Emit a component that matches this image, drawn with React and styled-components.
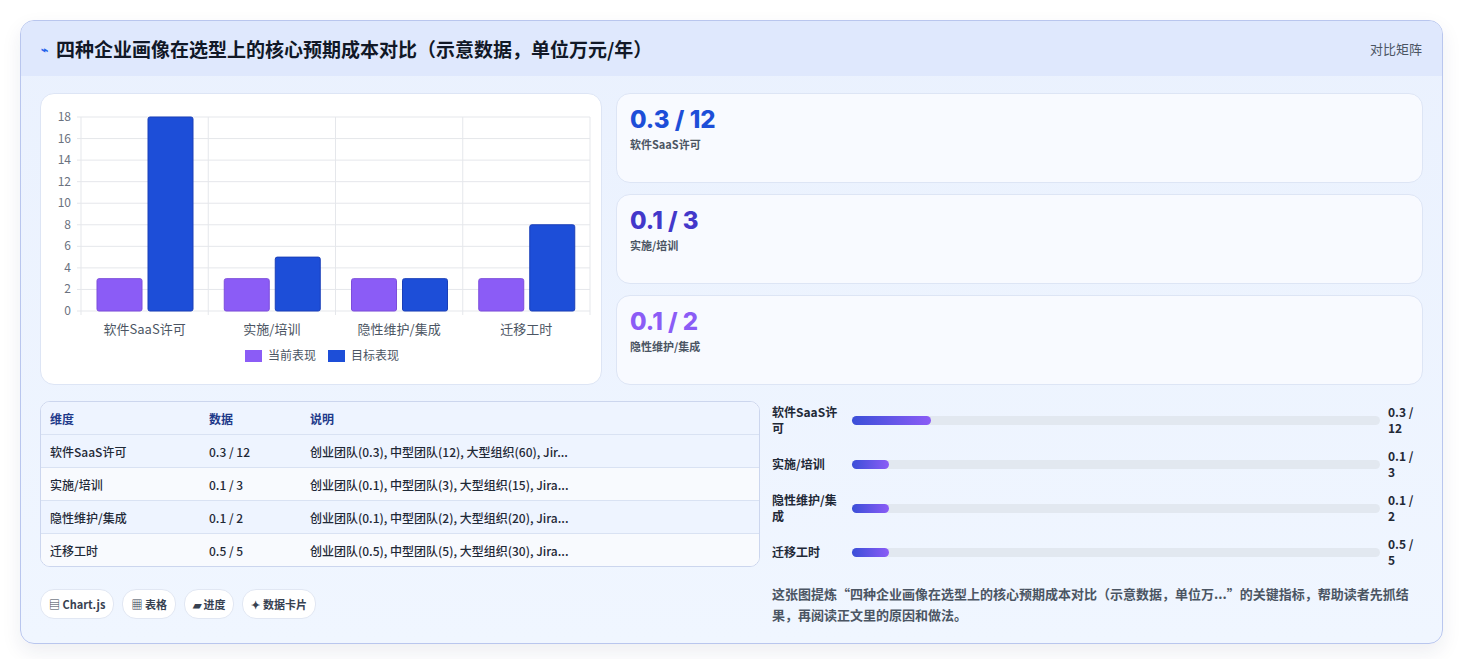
import React from 'react';
import styled, { createGlobalStyle } from 'styled-components';

const Global = createGlobalStyle`
  body { margin: 0; background: #fff; font-family: "Noto Sans CJK SC", "Noto Sans", sans-serif; }
`;

const rows = [
  { name: '软件SaaS许可', a: 0.3, b: 12, cur: 3, tgt: 18, desc: '创业团队(0.3), 中型团队(12), 大型组织(60), Jir...' },
  { name: '实施/培训', a: 0.1, b: 3, cur: 3, tgt: 5, desc: '创业团队(0.1), 中型团队(3), 大型组织(15), Jira...' },
  { name: '隐性维护/集成', a: 0.1, b: 2, cur: 3, tgt: 3, desc: '创业团队(0.1), 中型团队(2), 大型组织(20), Jira...' },
  { name: '迁移工时', a: 0.5, b: 5, cur: 3, tgt: 8, desc: '创业团队(0.5), 中型团队(5), 大型组织(30), Jira...' },
];
const barPct = [15, 7, 7, 7];
const cards = [
  { v: '0.3 / 12', l: '软件SaaS许可', c: '#1d4ed8' },
  { v: '0.1 / 3', l: '实施/培训', c: '#4338ca' },
  { v: '0.1 / 2', l: '隐性维护/集成', c: '#8b5cf6' },
];

const Page = styled.div`padding: 20px; height: 659px; box-sizing: border-box;`;
const Frame = styled.div`
  width: 1421px; border: 1px solid #b9c6ee; border-radius: 14px; overflow: hidden;
  background: linear-gradient(180deg, #eaf1fe, #f0f6ff); box-shadow: 0 8px 20px rgba(30,40,90,0.08);
`;
const Header = styled.div`
  height: 55px; background: #dfe8fd; display: flex; align-items: center; justify-content: space-between;
  padding: 0 20px;
`;
const Title = styled.h1`margin: 0; font-size: 19px; font-weight: 700; color: #111827; display: flex; align-items: center; gap: 8px;`;
const Tag = styled.span`font-size: 13px; color: #4b5563;`;
const Body = styled.div`padding: 17px 19px 18px 19px; display: flex; flex-direction: column; gap: 16px;`;
const Top = styled.div`display: grid; grid-template-columns: 562px 1fr; gap: 14px;`;
const Bottom = styled.div`display: grid; grid-template-columns: 720px 1fr; gap: 12px;`;
const ChartCard = styled.div`background: #fff; border: 1px solid #dde5f5; border-radius: 14px; height: 292px; box-sizing: border-box;`;
const Cards = styled.div`display: flex; flex-direction: column; gap: 11px;`;
const Stat = styled.div`
  height: 90px; box-sizing: border-box; background: #f8faff; border: 1px solid #dde5f5; border-radius: 14px;
  padding: 11px 13px;
`;
const StatV = styled.div`font-family: Inter, "Noto Sans", sans-serif; font-size: 24px; font-weight: 800; color: ${p => p.c};`;
const StatL = styled.div`font-size: 11px; font-weight: 600; color: #4b5563; margin-top: 2px;`;
const Table = styled.div`border: 1px solid #ccd6ee; border-radius: 10px; overflow: hidden; background: #fff;`;
const Row = styled.div`
  display: grid; grid-template-columns: 159px 101px 1fr; height: 32px; align-items: center; padding-left: 9px;
  font-size: 12px; color: #1f2937; background: ${p => p.alt ? '#f8fafe' : '#eef4ff'};
  border-top: ${p => p.first ? 'none' : '1px solid #d9e2f3'};
  font-weight: ${p => p.head ? 700 : 500};
  ${p => p.head && 'color: #1e3a8a; background: #eef4ff;'}
`;
const Prog = styled.div`display: flex; flex-direction: column; gap: 10px; padding-top: 2px;`;
const PRow = styled.div`display: grid; grid-template-columns: 80px 1fr 35px; align-items: center; min-height: 34px;`;
const PName = styled.div`font-size: 12px; font-weight: 700; color: #1f2937; line-height: 16px; padding-right: 6px;`;
const Track = styled.div`height: 9px; border-radius: 5px; background: #e2e8f0; margin-right: 8px;`;
const Fill = styled.div`height: 100%; border-radius: 5px; background: linear-gradient(90deg, #3b4fd8, #8b5cf6);`;
const PVal = styled.div`font-size: 12px; font-weight: 700; color: #1f2937; line-height: 16px;`;
const Chips = styled.div`display: flex; gap: 8px;`;
const Chip = styled.span`
  background: #fff; border: 1px solid #e1e7f3; border-radius: 14px; padding: 6px 8px; font-size: 11px; font-weight: 700; color: #374151;
`;
const Note = styled.p`margin: 14px 0 0; font-size: 13px; line-height: 21px; color: #4b5563; font-weight: 600;`;
const LeftBottom = styled.div`display: flex; flex-direction: column; gap: 22px; align-items: flex-start;`;

function Chart() {
  const x0 = 40, y0 = 217, h = 194, w = 509, step = w / 4;
  const u = h / 18;
  return (
    <svg width="560" height="289" style={{ display: 'block' }} fontFamily="'Noto Sans CJK SC', sans-serif">
      {[0, 2, 4, 6, 8, 10, 12, 14, 16, 18].map(v => (
        <g key={v}>
          <line x1={x0 - 4} x2={x0 + w} y1={y0 - v * u} y2={y0 - v * u} stroke="#e5e7eb" />
          <text x={x0 - 10} y={y0 - v * u + 4} fontSize="12" fill="#6b7280" textAnchor="end">{v}</text>
        </g>
      ))}
      {[0, 1, 2, 3, 4].map(i => <line key={i} x1={x0 + i * step} x2={x0 + i * step} y1={y0 - h} y2={y0 + 4} stroke="#e5e7eb" />)}
      {rows.map((r, i) => {
        const bx = x0 + i * step + 16;
        return (
          <g key={r.name}>
            <rect x={bx} y={y0 - r.cur * u} width="45" height={r.cur * u} fill="#8b5cf6" stroke="#7c4ddb" rx="2" />
            <rect x={bx + 51} y={y0 - r.tgt * u} width="45" height={r.tgt * u} fill="#1d4ed8" stroke="#1a3fb8" rx="2" />
            <text x={x0 + i * step + step / 2} y={y0 + 23} fontSize="13" fill="#4b5563" textAnchor="middle">{r.name}</text>
          </g>
        );
      })}
      <rect x="204" y="256" width="17" height="12" fill="#8b5cf6" />
      <text x="227" y="266" fontSize="12" fill="#4b5563">当前表现</text>
      <rect x="287" y="256" width="17" height="12" fill="#1d4ed8" />
      <text x="310" y="266" fontSize="12" fill="#4b5563">目标表现</text>
    </svg>
  );
}

export default function App() {
  return (
    <Page>
      <Global />
      <Frame>
        <Header>
          <Title><span style={{ fontSize: 12, color: '#2563eb' }}>⌁</span>四种企业画像在选型上的核心预期成本对比（示意数据，单位万元/年）</Title>
          <Tag>对比矩阵</Tag>
        </Header>
        <Body>
          <Top>
            <ChartCard><Chart /></ChartCard>
            <Cards>
              {cards.map(c => <Stat key={c.l}><StatV c={c.c}>{c.v}</StatV><StatL>{c.l}</StatL></Stat>)}
            </Cards>
          </Top>
          <Bottom>
            <LeftBottom>
              <Table style={{ alignSelf: 'stretch' }}>
                <Row head first><span>维度</span><span>数据</span><span>说明</span></Row>
                {rows.map((r, i) => (
                  <Row key={r.name} alt={i % 2 === 1}><span>{r.name}</span><span>{r.a} / {r.b}</span><span>{r.desc}</span></Row>
                ))}
              </Table>
              <Chips>
                <Chip>▤ Chart.js</Chip><Chip>▦ 表格</Chip><Chip>▰ 进度</Chip><Chip>✦ 数据卡片</Chip>
              </Chips>
            </LeftBottom>
            <div>
              <Prog>
                {rows.map((r, i) => (
                  <PRow key={r.name}>
                    <PName>{r.name}</PName>
                    <Track><Fill style={{ width: `${barPct[i]}%` }} /></Track>
                    <PVal>{r.a} / {r.b}</PVal>
                  </PRow>
                ))}
              </Prog>
              <Note>这张图提炼“四种企业画像在选型上的核心预期成本对比（示意数据，单位万...”的关键指标，帮助读者先抓结果，再阅读正文里的原因和做法。</Note>
            </div>
          </Bottom>
        </Body>
      </Frame>
    </Page>
  );
}
